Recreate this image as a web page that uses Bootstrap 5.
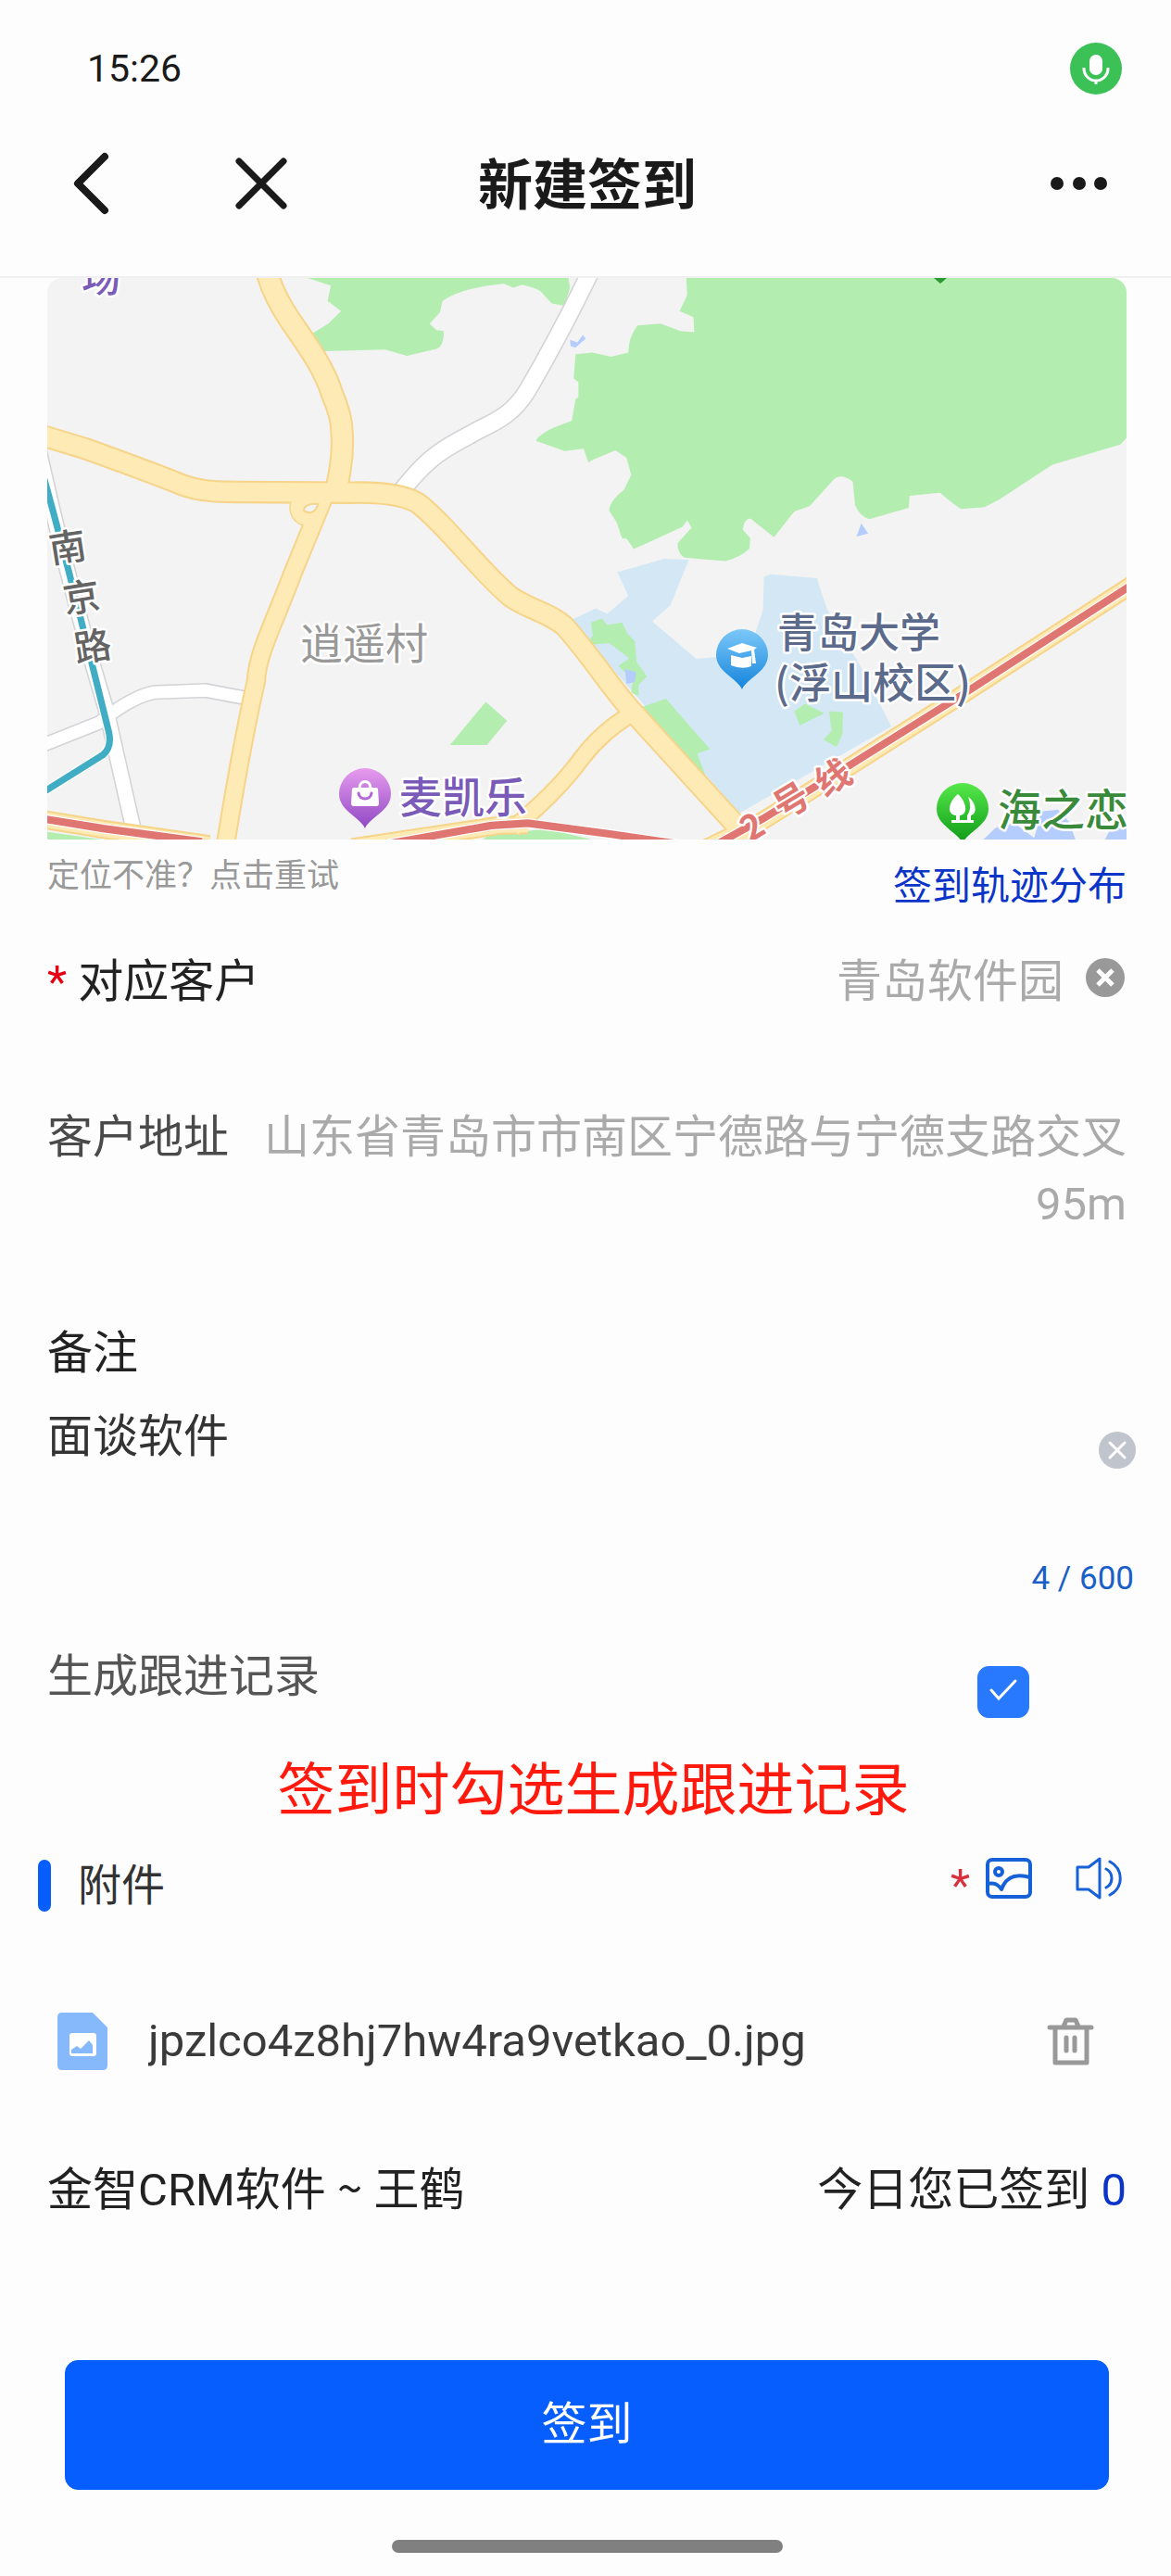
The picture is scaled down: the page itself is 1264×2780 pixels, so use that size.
<!DOCTYPE html>
<html lang="zh-CN">
<head>
<meta charset="utf-8">
<meta name="viewport" content="width=device-width, initial-scale=1">
<title>新建签到</title>
<link href="https://cdn.jsdelivr.net/npm/bootstrap@5.3.0/dist/css/bootstrap.min.css" rel="stylesheet">
<style>
  body { font-family: Roboto, "Noto Sans CJK SC", sans-serif; font-size: 49px; line-height: 72px; color: #222; background: #fdfdfe; }
  svg { display: block; flex: none; }
  .status-bar { height: 148px; padding: 0 52px 0 94px; font-size: 41px; color: #1a1a1a; }
  .title-bar { height: 152px; padding: 0 68px 50px 72px; border-bottom: 2px solid #f0f0f1; color: #1a1a1a; }
  .title-bar h1 { padding-top: 6px; font-size: 59px; line-height: 80px; font-weight: 700; }
  .title-side { flex: 1 1 0; }
  .close-btn { margin-left: 128px; }
  .page-body { padding: 0 48px 0 51px; }
  .map-view { width: 100%; height: auto; border-radius: 16px 16px 0 0; }
  .locate-row { height: 80px; }
  .retry-btn { margin-top: 16px; font-size: 35px; line-height: 48px; color: #999; }
  .track-link { margin-top: 25px; font-size: 42px; line-height: 52px; color: #0b35c9; }
  .plain-field { border: 0; padding: 0; background: transparent; resize: none; outline: 0; overflow: hidden; min-width: 0; }
  .soft-text { color: #aaa; }
  .label-text { color: #4a4a4a; }
  .star { color: #e60012; }
  .customer-row { height: 148px; }
  .customer-clear { margin-left: 22px; }
  .address-row { padding-top: 58px; }
  .note-label { margin-top: 89px; margin-bottom: 18px; }
  .note-field { height: 144px; color: #333; }
  .note-row { margin-right: -10px; }
  .note-clear { margin-top: 30px; }
  .note-count { margin-right: -8px; margin-top: 21px; font-size: 35px; line-height: 48px; color: #1a5fc8; }
  .follow-row { margin-top: 46px; }
  .follow-label { color: #555; }
  .follow-check.form-check-input { width: 56px; height: 56px; margin: 24px 105px 0 0; border-radius: 12px; }
  .follow-check.form-check-input:checked { background-color: #2979ff; border-color: #2979ff; background-size: 46px 46px;
    background-image: url("data:image/svg+xml,%3csvg xmlns='http://www.w3.org/2000/svg' viewBox='0 0 46 46'%3e%3cpath fill='none' stroke='%23fff' stroke-width='3' stroke-linecap='round' d='m10 21 8 9 18-19'/%3e%3c/svg%3e"); }
  .tip-text { margin: 35px 0 0 14px; font-size: 62px; line-height: 88px; color: #ff1a0d; }
  .attach-head { margin-top: 22px; margin-left: -10px; }
  .accent-bar { width: 14px; height: 56px; border-radius: 7px; background: #065eff; }
  .attach-title { margin-left: 29px; font-size: 47px; color: #333; }
  .attach-star { color: #d9303e; }
  .audio-btn { margin-left: 45px; }
  .file-row { margin-top: 96px; padding: 0 34px 0 11px; color: #3a3a3a; }
  .file-name { margin-left: 44px; }
  .summary-row { margin-top: 89px; }
  .tilde { font-family: "Noto Sans CJK SC", sans-serif; line-height: 1; }
  .count-num { color: #0b35c9; }
  .submit-btn.btn { --bs-btn-bg: #065eff; --bs-btn-border-color: #065eff; margin: 147px 19px 0; height: 140px; font-size: 49px; border-radius: 14px; }
  .home-bar { width: 422px; height: 14px; margin-top: 54px; border-radius: 7px; background: #808080; }
  .halo { paint-order: stroke; stroke: #fff; stroke-width: 5px; stroke-linejoin: round; }
</style>
<script src="https://cdn.jsdelivr.net/npm/bootstrap@5.3.0/dist/js/bootstrap.bundle.min.js"></script>
</head>
<body>
<div class="status-bar d-flex align-items-center justify-content-between">
  <span>15:26</span>
  <svg width="58" height="58" viewBox="0 0 58 58"><circle cx="29" cy="29" r="28" fill="#3cc157"/><rect x="22" y="14" width="14" height="22" rx="7" fill="#fff"/><path d="M16 28v1a13 13 0 0 0 26 0v-1M29 42v4" fill="none" stroke="#fff" stroke-width="3"/></svg>
</div>
<header class="title-bar d-flex align-items-center">
  <div class="title-side d-flex align-items-center">
    <button class="btn p-0 border-0" aria-label="返回"><svg width="50" height="72" viewBox="0 0 50 72"><path d="M41 7 12 36l29 29" fill="none" stroke="#1a1a1a" stroke-width="8" stroke-linecap="round" stroke-linejoin="round"/></svg></button>
    <button class="close-btn btn p-0 border-0" aria-label="关闭"><svg width="64" height="64" viewBox="0 0 64 64"><path d="m8 8 48 48M56 8 8 56" stroke="#1a1a1a" stroke-width="7" stroke-linecap="round"/></svg></button>
  </div>
  <h1 class="m-0">新建签到</h1>
  <div class="title-side d-flex justify-content-end">
    <button class="btn p-0 border-0" aria-label="更多"><svg width="64" height="20" viewBox="0 0 64 20"><g fill="#1a1a1a"><circle cx="9" cy="10" r="7"/><circle cx="33" cy="10" r="7"/><circle cx="56" cy="10" r="7"/></g></svg></button>
  </div>
</header>
<main class="page-body">
  <svg class="map-view" viewBox="0 0 1165 606" font-family="Noto Sans CJK SC, sans-serif">
    <defs>
      <linearGradient id="pinPurple" x2="0" y2="1"><stop stop-color="#e79bee"/><stop offset="1" stop-color="#8f48c4"/></linearGradient>
      <linearGradient id="pinBlue" x2="0" y2="1"><stop stop-color="#7cc8f8"/><stop offset="1" stop-color="#1484dc"/></linearGradient>
      <linearGradient id="pinGreen" x2="0" y2="1"><stop stop-color="#55e84a"/><stop offset="1" stop-color="#0f9a18"/></linearGradient>
    </defs>
    <rect width="1165" height="606" fill="#f3f3f3"/>
    <g transform="translate(-11 -10) scale(.3954 .4082)" fill="none" stroke-linejoin="round">
      <!-- parks, campus, water -->
      <g fill="#b4edb0">
        <path d="M740 25 802 45 793 85 830 112 795 145 750 172 785 218 950 214 1010 230 1090 212Q1112 205 1110 165L1090 162 1072 145 1100 115 1107 85Q1160 50 1275 40L1300 50 1325 42Q1360 50 1375 60L1405 92 1440 98 1455 50 1450 20H740z"/>
        <path d="M1225 1145 1283 1195 1228 1259H1127z"/>
        <path d="M20 1488 220 1515H20zM1230 1500 1390 1480 1560 1520H1200z"/>
      </g>
      <g transform="translate(1517)">
        <path fill="#d3e8f4" d="M-62 930 8 898 40 912 97 865 67 802 195 767 262 770 212 890 162 932 282 1031 445 1020 445 960 465 900 467 815 485 808 612 818 640 900 700 1000 730 1050 815 1210 400 1440z"/>
        <path fill="#b4edb0" d="M255 20 258 70 237 112 275 128 277 168 240 165 185 145 122 150Q98 180 97 222L50 233 0 222-47 226-52 290-39 300-39 340-47 345-57 402-107 420Q-150 440-155 455L-77 482-25 476-12 512 0 505 62 480 92 500 105 545 85 585Q45 615 45 640L65 670 80 712 93 714 112 741 160 720 245 682 258 665 270 685 232 725Q230 750 250 764L362 773Q400 765 428 740L430 712 410 690Q412 662 430 660L495 710 550 642 592 628 660 555Q680 540 710 563L716 625Q730 655 755 662L863 632 865 600 948 592Q980 620 1005 635L1070 630 1110 610 1255 518 1440 465 1457 448 1470 20z"/>
        <path fill="#b4edb0" d="M-20 995 0 970-5 935 25 925 40 942 80 935 95 965 115 985 120 1040 148 1078 125 1100 125 1130 105 1120 110 1090 70 1050 100 1030 45 990zM130 1160 200 1137 320 1270 285 1282 310 1345 240 1280zM550 1170 580 1150 632 1175 565 1208zM645 1170 683 1172 682 1230 665 1264 630 1245 652 1222z"/>
        <path fill="#b5cdfd" d="M88 1058 118 1066 115 1092 92 1098zM733 673 752 700 720 708zM1060 1515 1100 1478 1150 1465 1205 1505 1225 1435 1270 1430 1300 1462 1320 1515zM1395 1515 1415 1478 1470 1460V1515zM-62 188-42 195-27 175-19 185-47 208-60 205z"/>
      </g>
      <!-- white streets -->
      <g>
        <g stroke="#d4d4d8"><path stroke-width="52" d="M1510 10C1430 170 1370 270 1340 320 1290 400 1230 410 1180 440 1100 480 1060 505 985 600"/><path stroke-width="40" d="M10 1262 170 1200Q260 1130 320 1120L460 1115 580 1137"/><path stroke-width="46" d="M5 480C60 720 120 950 190 1170L272 1520"/></g>
        <g stroke="#fff"><path stroke-width="44" d="M1510 10C1430 170 1370 270 1340 320 1290 400 1230 410 1180 440 1100 480 1060 505 985 600"/><path stroke-width="32" d="M10 1262 170 1200Q260 1130 320 1120L460 1115 580 1137"/><path stroke-width="38" d="M5 480C60 720 120 950 190 1170L272 1520"/></g>
      </g>
      <!-- main roads: casing, then fill -->
      <g stroke="#f6d48a">
        <circle cx="738" cy="632" r="46" stroke-width="7"/>
        <path stroke-width="64" d="M628 10Q645 70 690 135C740 205 785 265 805 330Q832 390 832 430 838 500 815 590"/>
        <path stroke-width="60" d="M10 440 130 475Q330 545 400 573 450 590 520 590L860 592Q990 590 1040 620C1120 680 1200 790 1290 865 1340 900 1400 910 1440 945 1510 1020 1560 1100 1620 1165L1940 1505"/>
        <path stroke-width="54" d="M785 600 700 800C650 930 600 1020 598 1090Q560 1250 515 1520"/>
        <path stroke-width="50" d="M1617 1180C1570 1210 1530 1240 1490 1290 1430 1370 1360 1430 1300 1480"/>
        <path stroke-width="50" d="M10 1455 180 1482 470 1522M860 1530 1260 1472 1340 1470M1820 1535 1980 1460 2220 1315 2520 1130 2990 835"/>
      </g>
      <g stroke="#feeab4">
        <circle cx="738" cy="632" r="46" fill="#feeab4" stroke="none"/>
        <path stroke-width="54" d="M628 10Q645 70 690 135C740 205 785 265 805 330Q832 390 832 430 838 500 815 590"/>
        <path stroke-width="50" d="M10 440 130 475Q330 545 400 573 450 590 520 590L860 592Q990 590 1040 620C1120 680 1200 790 1290 865 1340 900 1400 910 1440 945 1510 1020 1560 1100 1620 1165L1940 1505"/>
        <path stroke-width="44" d="M785 600 700 800C650 930 600 1020 598 1090Q560 1250 515 1520"/>
        <path stroke-width="40" d="M1617 1180C1570 1210 1530 1240 1490 1290 1430 1370 1360 1430 1300 1480"/>
        <path stroke-width="40" d="M10 1455 180 1482 470 1522M860 1530 1260 1472 1340 1470M1820 1535 1980 1460 2220 1315 2520 1130 2990 835"/>
      </g>
      <path d="M728 640Q728 620 768 622 755 655 728 640z" fill="#f3f3f3" stroke="#f6d48a" stroke-width="5"/>
      <!-- metro lines -->
      <path stroke="#fff" stroke-width="26" d="M10 1453 180 1480 450 1515M960 1520 1240 1472 1340 1466 1568 1495 1780 1525M1840 1530 1980 1455 2220 1312 2520 1130 2990 835"/>
      <path stroke="#e07672" stroke-width="20" d="M10 1453 180 1480 450 1515M960 1520 1240 1472 1340 1466 1568 1495 1780 1525M1840 1530 1980 1455 2220 1312 2520 1130 2990 835"/>
      <path stroke="#fff" stroke-width="24" d="M15 540C70 730 110 890 150 1045L196 1225Q205 1265 180 1285L15 1385"/>
      <path stroke="#40adc4" stroke-width="18" d="M15 540C70 730 110 890 150 1045L196 1225Q205 1265 180 1285L15 1385"/>
    </g>
    <path d="M957 0h14l-7 6z" fill="#2a9a35"/>
    <!-- place markers -->
    <g transform="translate(343 557)"><path d="M0 37C-5 25-28 18-28 0a28 28 0 0 1 56 0C28 18 5 25 0 37z" fill="url(#pinPurple)"/><path d="M-12-7h24q2 0 2 2l1 15q0 3-3 3h-24q-3 0-3-3l1-15q0-2 2-2z" fill="#fff"/><path d="M-6-6c0-10 12-10 12 0" fill="none" stroke="#fff" stroke-width="3"/><path d="M-7-1c1 8 13 8 14 0" fill="none" stroke="#b265d6" stroke-width="3" stroke-linecap="round"/></g>
    <g transform="translate(750 407)"><path d="M0 37C-5 25-28 18-28 0a28 28 0 0 1 56 0C28 18 5 25 0 37z" fill="url(#pinBlue)"/><path d="m-16-7 16-6 16 5-3 2 2 15h-4l-1-14-13 3zM-12 0 0 3l10-2v11q-10 4-22-1z" fill="#fff"/></g>
    <g transform="translate(988 573)"><path d="M0 37C-5 25-28 18-28 0a28 28 0 0 1 56 0C28 18 5 25 0 37z" fill="url(#pinGreen)"/><path d="M-5-16C-15-8-18 6-7 7v5h-5v3h24v-3H-3V7C7 6 4-8-5-16z" fill="#fff"/><path d="M6-13C14-8 17 5 9 7v5H5V7C9 2 9-6 6-13z" fill="#fff"/></g>
    <g class="halo" font-size="44" font-weight="500">
      <text x="37" y="15" font-size="42" fill="#7a5bb8">场</text>
      <text x="273" y="411" font-size="46" font-weight="400" fill="#999">逍遥村</text>
      <text x="380" y="577" font-size="46" fill="#7a5bb8">麦凯乐</text>
      <text x="788" y="399" fill="#5c6b8c">青岛大学</text>
      <text x="785" y="454" font-size="45" fill="#5c6b8c">(浮山校区)</text>
      <text x="1026" y="591" font-size="47" fill="#3a8a3c">海之恋</text>
      <g font-size="40" fill="#646464" text-anchor="middle"><text transform="translate(22 290) rotate(-9)" y="15">南</text><text transform="translate(37 344) rotate(-9)" y="15">京</text><text transform="translate(49 397) rotate(-9)" y="15">路</text></g>
      <g font-size="38" font-weight="700" fill="#e07672" text-anchor="middle"><text transform="translate(761 592) rotate(-31)" y="14">2</text><text transform="translate(803 564) rotate(-31)" y="14">号</text><text transform="translate(848 539) rotate(-31)" y="14">线</text></g>
    </g>
  </svg>

  <div class="locate-row d-flex justify-content-between align-items-start">
    <button type="button" class="retry-btn btn p-0 border-0">定位不准？点击重试</button>
    <a href="#track" class="track-link text-decoration-none">签到轨迹分布</a>
  </div>

  <form>
    <div class="customer-row d-flex align-items-center">
      <label for="customer" class="text-nowrap"><span class="star">*</span> 对应客户</label>
      <input id="customer" class="plain-field soft-text flex-grow-1 text-end" value="青岛软件园" readonly>
      <button type="button" class="customer-clear btn p-0 border-0 mb-2" aria-label="清除客户"><svg width="46" height="46" viewBox="0 0 46 46"><circle cx="23" cy="22" r="21" fill="#999"/><path d="m15 14 16 16m0-16L15 30" stroke="#fff" stroke-width="5"/></svg></button>
    </div>

    <div class="address-row d-flex align-items-start">
      <label for="address" class="label-text text-nowrap">客户地址</label>
      <textarea id="address" rows="2" class="plain-field soft-text flex-grow-1 text-end ms-2" readonly>山东省青岛市市南区宁德路与宁德支路交叉95m</textarea>
    </div>

    <label for="note" class="note-label d-block">备注</label>
    <div class="note-row d-flex align-items-start">
      <textarea id="note" maxlength="600" class="note-field plain-field flex-grow-1">面谈软件</textarea>
      <button type="button" class="note-clear btn p-0 border-0" aria-label="清除备注"><svg width="40" height="40" viewBox="0 0 40 40"><circle cx="20" cy="20" r="20" fill="#c0c4cc"/><path d="m12 12 16 16m0-16L12 28" stroke="#fff" stroke-width="3" stroke-linecap="round"/></svg></button>
    </div>
    <div class="note-count text-end">4 / 600</div>

    <div class="follow-row d-flex justify-content-between align-items-start">
      <label for="follow" class="follow-label">生成跟进记录</label>
      <input id="follow" type="checkbox" class="follow-check form-check-input" checked>
    </div>
    <p class="tip-text text-center mb-0">签到时勾选生成跟进记录</p>

    <div class="attach-head d-flex align-items-center">
      <span class="accent-bar"></span>
      <span class="attach-title">附件</span>
      <span class="attach-star ms-auto me-3">*</span>
      <button type="button" class="btn p-0 border-0 mb-3" aria-label="添加图片"><svg width="52" height="46" viewBox="0 0 52 46" fill="none" stroke="#1660d8" stroke-width="4"><rect x="3" y="3" width="46" height="40" rx="5"/><circle cx="15" cy="16" r="4"/><path d="M3 29q10-2 15 6 7-20 31-13" stroke-linejoin="round"/></svg></button>
      <button type="button" class="audio-btn btn p-0 border-0 mb-3" aria-label="添加录音"><svg width="56" height="48" viewBox="0 0 56 48" fill="none" stroke="#1660d8" stroke-width="3" stroke-linejoin="round" stroke-linecap="round"><path d="M3 12h12L27 3v42l-12-9H3zM34 14c8 4 8 16 0 20M38 6c15 8 15 28 0 36"/></svg></button>
    </div>

    <div class="file-row d-flex align-items-center">
      <svg width="54" height="62" viewBox="0 0 54 62"><path d="M5 0h33l16 16v41q0 5-5 5H5q-5 0-5-5V5q0-5 5-5z" fill="#86b9fb"/><rect x="13" y="22" width="29" height="25" rx="3" fill="#fff"/><path d="M15 44v-4l6-4 4 3 9-9 4 5v9z" fill="#86b9fb"/></svg>
      <span class="file-name text-truncate">jpzlco4z8hj7hw4ra9vetkao_0.jpg</span>
      <button type="button" class="btn p-0 border-0 ms-auto" aria-label="删除附件"><svg width="52" height="52" viewBox="0 0 52 52" fill="none" stroke="#999" stroke-linecap="round" stroke-linejoin="round"><path d="M3 11h45" stroke-width="5"/><path d="M9 12v37h34V12M18 10l3-7h10l3 7" stroke-width="5"/><path d="M21 22v14M30 22v14" stroke-width="5"/></svg></button>
    </div>

    <div class="summary-row d-flex justify-content-between">
      <span>金智CRM软件 <span class="tilde">~</span> 王鹤</span>
      <span>今日您已签到 <span class="count-num">0</span></span>
    </div>

    <div class="d-grid"><button type="button" class="submit-btn btn btn-primary">签到</button></div>
  </form>
  <div class="home-bar mx-auto"></div>
</main>
</body>
</html>
